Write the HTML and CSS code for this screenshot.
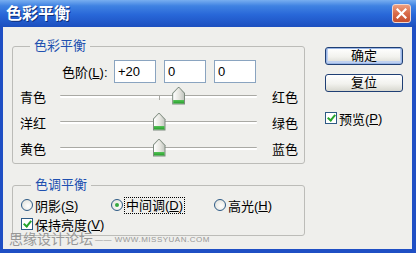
FILE: index.html
```html
<!DOCTYPE html>
<html lang="zh-CN">
<head>
  <meta charset="UTF-8" />
  <title>色彩平衡</title>
  <link rel="stylesheet" href="styles.css">
</head>
<body>
  <div class="window">
    <div class="titlebar">
      <span class="title">色彩平衡</span>
      <span class="close">
        <svg width="11" height="11" viewBox="0 0 11 11"><path d="M1.5 1.5 L9.5 9.5 M9.5 1.5 L1.5 9.5" stroke="#fff" stroke-width="2.2" stroke-linecap="square"/></svg>
      </span>
    </div>

    <div class="content">
      <div class="left">
        <fieldset class="group group-color">
          <legend>色彩平衡</legend>
          <div class="levels">
            <span class="levels-label">色阶(<u>L</u>):</span>
            <input class="field" type="text" value="+20">
            <input class="field" type="text" value="0">
            <input class="field" type="text" value="0">
          </div>
          <div class="slider-row">
            <span class="side-left">青色</span>
            <div class="track"><span class="tick"></span><span class="thumb" style="left: 60%"></span></div>
            <span class="side-right">红色</span>
          </div>
          <div class="slider-row">
            <span class="side-left">洋红</span>
            <div class="track"><span class="tick"></span><span class="thumb" style="left: 50%"></span></div>
            <span class="side-right">绿色</span>
          </div>
          <div class="slider-row">
            <span class="side-left">黄色</span>
            <div class="track"><span class="tick"></span><span class="thumb" style="left: 50%"></span></div>
            <span class="side-right">蓝色</span>
          </div>
        </fieldset>

        <fieldset class="group group-tone">
          <legend>色调平衡</legend>
          <div class="radios">
            <label class="radio r1"><span class="dot"></span>阴影(<u>S</u>)</label>
            <label class="radio r2 checked"><span class="dot"></span><span class="focus">中间调(<u>D</u>)</span></label>
            <label class="radio"><span class="dot"></span>高光(<u>H</u>)</label>
          </div>
          <label class="check"><span class="box"></span>保持亮度(<u>V</u>)</label>
        </fieldset>
      </div>

      <div class="right">
        <button class="btn default">确定</button>
        <button class="btn">复位</button>
        <label class="check preview"><span class="box"></span>预览(<u>P</u>)</label>
      </div>
    </div>

    <div class="watermark">思缘设计论坛<span class="wm-url">—— WWW.MISSYUAN.COM</span></div>
  </div>
</body>
</html>
```

FILE: styles.css
```css
body {
  margin: 0;
  font-family: "Liberation Sans", "Noto Sans CJK SC", sans-serif;
  font-size: 13px;
  color: #000;
}
.window {
  position: relative;
  width: 416px;
  height: 253px;
  box-sizing: border-box;
  background: #efefec;
  border-left: 3px solid #1f4fc4;
  border-right: 4px solid #1f4fc4;
  border-bottom: 4px solid #1f4fc4;
}
.titlebar {
  height: 27px;
  margin-left: -3px;
  margin-right: -4px;
  display: flex;
  align-items: center;
  padding: 0 5px 0 6px;
  background: linear-gradient(to bottom, #78aef0 0%, #3f82e2 22%, #2867d8 55%, #1c4fbf 100%);
}
.title {
  color: #fff;
  font-weight: bold;
  font-size: 16px;
  line-height: 18px;
  text-shadow: 1px 1px 0 #10307a;
  margin-top: 1px;
}
.close {
  margin-left: auto;
  width: 19px;
  height: 19px;
  box-sizing: border-box;
  border: 1px solid #f3d6cc;
  border-radius: 3px;
  background: linear-gradient(to bottom, #ee9f80, #d86a48 50%, #c44e2e);
  display: flex;
  align-items: center;
  justify-content: center;
}
.content {
  display: flex;
  padding: 12px 0 0 9px;
}
.left {
  width: 293px;
}
.group {
  margin: 0;
  padding: 0 0 2px 7px;
  border: 1px solid #bcbcb8;
  border-radius: 3px;
  min-width: 0;
}
.group legend {
  margin-left: 10px;
  padding: 0 4px;
  color: #2050b0;
  font-size: 13px;
  line-height: 14px;
}
.levels {
  display: flex;
  align-items: center;
  height: 23px;
  margin-top: 7px;
  padding-left: 42px;
}
.levels-label {
  width: 52px;
}
.field {
  width: 42px;
  height: 23px;
  box-sizing: border-box;
  margin: 0 8px 0 0;
  padding: 0 0 0 3px;
  border: 1px solid #8aa4c0;
  background: #fff;
  font-family: "Liberation Sans", sans-serif;
  font-size: 13px;
}
.slider-row {
  display: flex;
  align-items: center;
  height: 26px;
}
.slider-row:first-of-type {
  margin-top: 2px;
}
.side-left {
  width: 40px;
}
.track {
  position: relative;
  width: 197px;
  height: 2px;
  border-top: 1px solid #a9a9a4;
  background: #fff;
  border-radius: 1px;
}
.tick {
  position: absolute;
  left: 50%;
  top: 0;
  width: 1px;
  height: 4px;
  background: #a9a9a4;
}
.thumb {
  position: absolute;
  top: -9px;
  width: 13px;
  height: 18px;
  margin-left: -6px;
  background: #7d8a7e;
  clip-path: polygon(50% 0, 100% 38%, 100% 100%, 0 100%, 0 38%);
}
.thumb::before {
  content: "";
  position: absolute;
  inset: 1px;
  background: linear-gradient(to bottom, transparent 0, transparent 72%, #5cc85c 72%, #1f9a25 100%),
              linear-gradient(to right, #ffffff, #e6e6e0 55%, #c2c6c0);
  clip-path: polygon(50% 0, 100% 38%, 100% 100%, 0 100%, 0 38%);
}
.side-right {
  margin-left: 15px;
}
.group-tone {
  margin-top: 14px;
  padding-left: 8px;
}
.radios {
  display: flex;
  align-items: center;
  height: 18px;
  margin-top: 4px;
}
.radio {
  display: flex;
  align-items: center;
}
.r1 {
  width: 90px;
}
.r2 {
  width: 103px;
}
.dot {
  width: 12px;
  height: 12px;
  box-sizing: border-box;
  border: 1px solid #2d5a85;
  border-radius: 50%;
  background: radial-gradient(circle at 60% 60%, #ffffff, #dcdcd4);
  margin-right: 2px;
  display: flex;
  align-items: center;
  justify-content: center;
}
.checked .dot::after {
  content: "";
  width: 4px;
  height: 4px;
  border-radius: 50%;
  background: #36a840;
}
.focus {
  outline: 1px dotted #000;
  padding: 0 1px;
  line-height: 15px;
}
.check {
  display: flex;
  align-items: center;
  height: 18px;
  margin-top: 1px;
}
.box {
  width: 12px;
  height: 12px;
  box-sizing: border-box;
  border: 1px solid #2d5a85;
  background: #fff;
  margin-right: 2px;
  position: relative;
}
.box::after {
  content: "";
  position: absolute;
  left: 3px;
  top: 0px;
  width: 3px;
  height: 6px;
  border: solid #27a52d;
  border-width: 0 2px 2px 0;
  transform: rotate(40deg);
}
.right {
  display: flex;
  flex-direction: column;
  margin: 8px 0 0 20px;
}
.btn {
  width: 78px;
  height: 18px;
  margin: 0 0 9px 0;
  padding: 0;
  border: 1px solid #1f3f74;
  border-radius: 3px;
  background: linear-gradient(to bottom, #ffffff, #f2f2ee 55%, #d8d8d0);
  font-family: "Liberation Sans", "Noto Sans CJK SC", sans-serif;
  font-size: 13px;
  line-height: 14px;
  color: #000;
}
.btn.default {
  box-shadow: inset 0 0 0 1px #9ab6e6, inset 0 -1px 0 2px #bed0f0;
}
.preview {
  margin-top: 8px;
}
.watermark {
  position: absolute;
  left: 6px;
  top: 231px;
  color: #8a8a8a;
  font-size: 14px;
  line-height: 16px;
  opacity: 0.85;
  white-space: nowrap;
}
.wm-url {
  font-size: 8px;
  margin-left: 2px;
  letter-spacing: 0.5px;
  vertical-align: 2px;
}
```
